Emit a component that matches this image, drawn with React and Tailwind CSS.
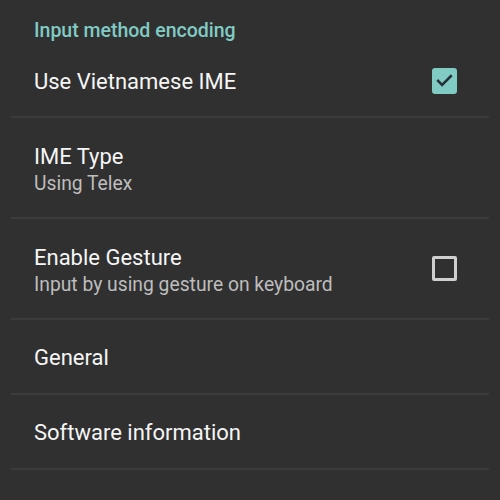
import React from "react";

function Divider() {
  return <div className="mx-[11px] h-[2px] bg-[#3b3b3b]" />;
}

function Check({ checked }) {
  if (checked) {
    return (
      <div className="w-[25px] h-[26px] rounded-[3px] bg-[#80cbc4] flex items-center justify-center">
        <svg width="19" height="19" viewBox="0 0 24 24" fill="none">
          <path d="M4 12.5l5 5L20 6.5" stroke="#263238" strokeWidth="3.2" strokeLinecap="square" />
        </svg>
      </div>
    );
  }
  return <div className="w-[25px] h-[25px] rounded-[2px] border-[3px] border-[#cfcfcf]" />;
}

function Row({ title, subtitle, h, check }) {
  return (
    <div className={`flex items-center pl-[34px] pr-[43px] ${h}`}>
      <div className={`flex-1 flex flex-col ${subtitle ? "pt-[4px]" : "pt-[2px]"}`}>
        <div className="text-[22px] leading-[28px] text-[#f5f5f5]">{title}</div>
        {subtitle && <div className="text-[19.3px] leading-[26px] text-[#bdbdbd]">{subtitle}</div>}
      </div>
      {check !== undefined && <Check checked={check} />}
    </div>
  );
}

export default function App() {
  return (
    <div className="w-[500px] h-[500px] bg-[#303030] overflow-hidden" style={{ fontFamily: "Roboto, sans-serif" }}>
      <div className="h-[45px] pl-[34px] pt-[19px] text-[19.5px] leading-[24px] font-medium text-[#80cbc4]">
        Input method encoding
      </div>
      <Row title="Use Vietnamese IME" h="h-[71px]" check={true} />
      <Divider />
      <Row title="IME Type" subtitle="Using Telex" h="h-[99px]" />
      <Divider />
      <Row title="Enable Gesture" subtitle="Input by using gesture on keyboard" h="h-[99px]" check={false} />
      <Divider />
      <Row title="General" h="h-[73px]" />
      <Divider />
      <Row title="Software information" h="h-[73px]" />
      <Divider />
    </div>
  );
}
